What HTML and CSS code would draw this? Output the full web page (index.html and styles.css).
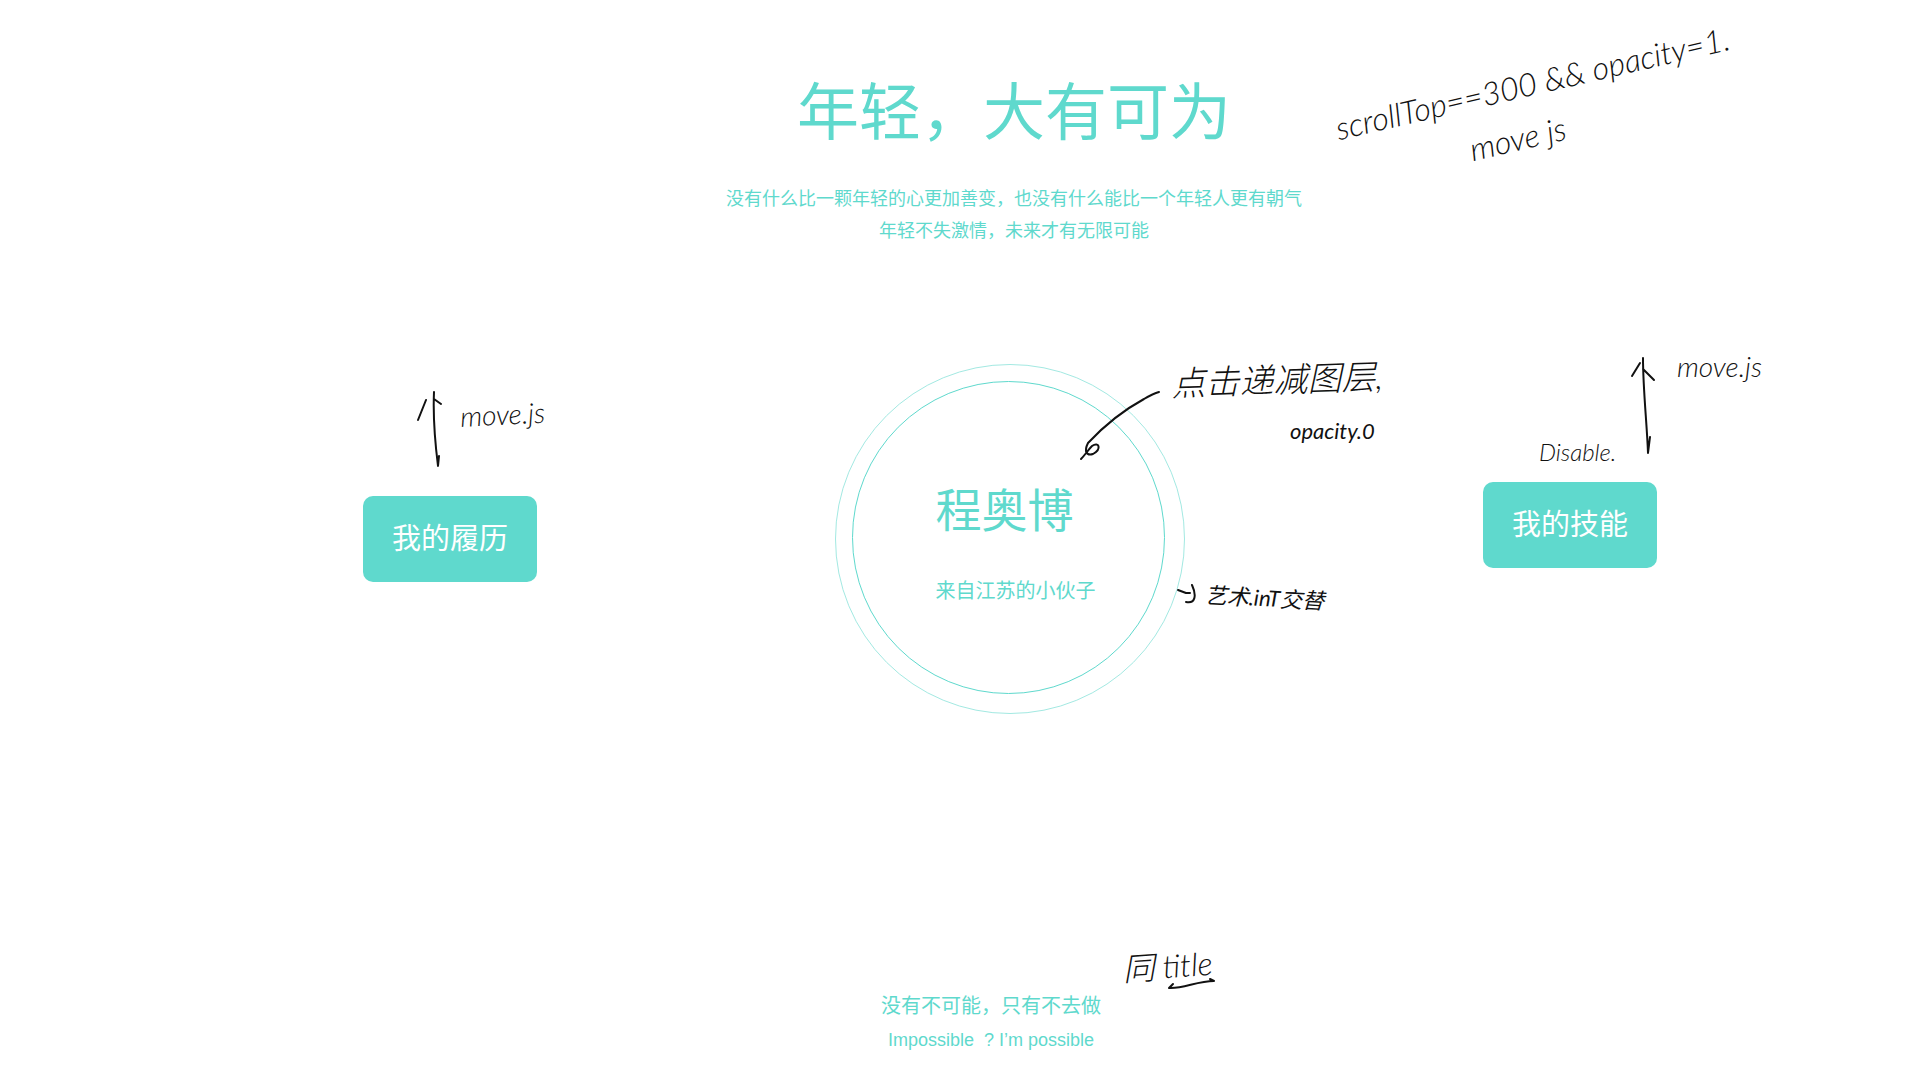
FILE: index.html
```html
<!DOCTYPE html>
<html lang="zh-CN">
<head>
<meta charset="utf-8">
<title>年轻，大有可为</title>
<link rel="stylesheet" href="styles.css">
</head>
<body>
<div class="page">
  <header class="hero">
    <h1 class="hero-title">年轻，大有可为</h1>
    <p class="hero-text">没有什么比一颗年轻的心更加善变，也没有什么能比一个年轻人更有朝气<br>年轻不失激情，未来才有无限可能</p>
    <span class="note note-scroll">scrollTop==300 &amp;&amp; opacity=1.</span>
    <span class="note note-scroll-move">move js</span>
  </header>

  <main class="stage">
    <div class="side">
      <button class="button" type="button">我的履历</button>
      <svg class="ink arrow-left" width="28" height="80" viewBox="0 0 28 80" aria-hidden="true"><path d="M17 2C16 24 18 52 21 76L22 66M1 30L9 10M17 9L24 14"/></svg>
      <span class="note note-left-move">move.js</span>
    </div>

    <div class="ring">
      <div class="ring-inner">
        <div class="person">
          <h2 class="person-name">程奥博</h2>
          <p class="person-text">来自江苏的小伙子</p>
        </div>
      </div>
      <svg class="ink pointer" width="84" height="74" viewBox="0 0 84 74" aria-hidden="true"><path d="M80 3C76 4 70 7 65 10C43 22 23 39 9 54C5 62 7 67 14 65C23 60 20 52 13 57C9 61 6 66 2 70"/></svg>
      <span class="note note-layer">点击递减图层,</span>
      <span class="note note-small note-opacity">opacity.0</span>
      <svg class="ink tick" width="22" height="22" viewBox="0 0 22 22" aria-hidden="true"><path d="M1 7L9 10L13 10M15 2C20 13 18 21 9 19"/></svg>
      <span class="note note-small note-swap">艺术.inT交替</span>
    </div>

    <div class="side side-raised">
      <button class="button" type="button">我的技能</button>
      <svg class="ink arrow-right" width="28" height="102" viewBox="0 0 28 102" aria-hidden="true"><path d="M13 2C13 34 17 68 18 97L20 81M2 20L10 7M13 13L24 24"/></svg>
      <span class="note note-right-move">move.js</span>
      <span class="note note-disable">Disable.</span>
    </div>
  </main>

  <footer class="closing">
    <div class="closing-body">
      <p class="closing-text">没有不可能，只有不去做</p>
      <p class="closing-latin">Impossible&nbsp; ? I’m possible</p>
      <span class="note note-title">同 title</span>
      <svg class="ink underline" width="50" height="16" viewBox="0 0 50 16" aria-hidden="true"><path d="M6 9L2 13C16 14 30 6 47 6L43 4"/></svg>
    </div>
  </footer>
</div>
</body>
</html>
```
FILE: styles.css
```css
* {
  box-sizing: border-box;
}

body,
h1,
h2,
p {
  margin: 0;
  font-weight: 400;
}

body {
  background: #fff;
  color: #5fd9cd;
  font-family: "Liberation Sans", "Noto Sans CJK SC", sans-serif;
}

.page {
  display: flex;
  flex-direction: column;
  min-height: 100vh;
  padding: 74px 0 23px 100px;
  overflow: hidden;
}

.hero {
  position: relative;
  padding-left: 8px;
  text-align: center;
}

.hero-title {
  margin-bottom: 29px;
  font-size: 62px;
  line-height: 80px;
}

.hero-text {
  font-size: 18px;
  line-height: 32px;
}

.stage {
  display: grid;
  grid-template-columns: repeat(3, 1fr);
  align-items: center;
  justify-items: center;
  margin: 117px 70px 0;
}

.side {
  position: relative;
}

.side-raised {
  margin-bottom: 28px;
}

.button {
  display: block;
  padding: 20px 29px;
  border: 0;
  border-radius: 10px;
  background: #5fd9cd;
  color: #fff;
  font-family: inherit;
  font-size: 29px;
  line-height: 46px;
}

.ring {
  position: relative;
  width: 350px;
  height: 350px;
  padding: 16px;
  border: 1px solid #a3e9e2;
  border-radius: 50%;
}

.ring-inner {
  display: flex;
  align-items: center;
  justify-content: center;
  width: 313px;
  height: 313px;
  padding: 12px 0 0 14px;
  border: 1px solid #5fd9cd;
  border-radius: 50%;
}

.person-name {
  margin-bottom: 35px;
  font-size: 46px;
  line-height: 60px;
}

.person-text {
  font-size: 20px;
  line-height: 30px;
}

.closing {
  display: flex;
  justify-content: center;
  margin-top: auto;
  padding-right: 38px;
}

.closing-body {
  position: relative;
  text-align: center;
}

.closing-text {
  font-size: 20px;
  line-height: 34px;
}

.closing-latin {
  font-size: 18px;
  line-height: 34px;
}

/* Pen notes laid over the design */
.note,
.ink {
  position: absolute;
}

.note {
  color: #111;
  font-family: Lato, "Noto Sans CJK SC", sans-serif;
  font-size: 28px;
  font-style: italic;
  font-weight: 300;
  line-height: 36px;
  white-space: nowrap;
  transform-origin: left bottom;
}

.note-small {
  font-size: 22px;
  font-weight: 400;
}

.ink {
  fill: none;
  stroke: #111;
  stroke-width: 2;
  stroke-linecap: round;
  stroke-linejoin: round;
}

.note-scroll {
  left: calc(50% + 330px);
  top: 36px;
  font-size: 32px;
  transform: rotate(-13deg);
}

.note-scroll-move {
  left: calc(50% + 464px);
  top: 57px;
  font-size: 32px;
  transform: rotate(-13deg);
}

.note-left-move {
  left: 98px;
  top: -98px;
  transform: rotate(-3deg);
}

.arrow-left {
  left: 54px;
  top: -106px;
}

.pointer {
  left: 243px;
  top: 24px;
}

.note-layer {
  left: 336px;
  top: 0;
  font-size: 34px;
  transform: rotate(-2deg);
}

.note-opacity {
  left: 454px;
  top: 48px;
}

.tick {
  left: 341px;
  top: 218px;
}

.note-swap {
  left: 368px;
  top: 212px;
  transform: rotate(3deg);
}

.note-right-move {
  left: 194px;
  top: -134px;
}

.note-disable {
  left: 56px;
  top: -48px;
  font-size: 24px;
}

.arrow-right {
  left: 147px;
  top: -126px;
}

.note-title {
  left: 243px;
  top: -38px;
  font-size: 32px;
  transform: rotate(-4deg);
}

.underline {
  left: 286px;
  top: -14px;
}
```
